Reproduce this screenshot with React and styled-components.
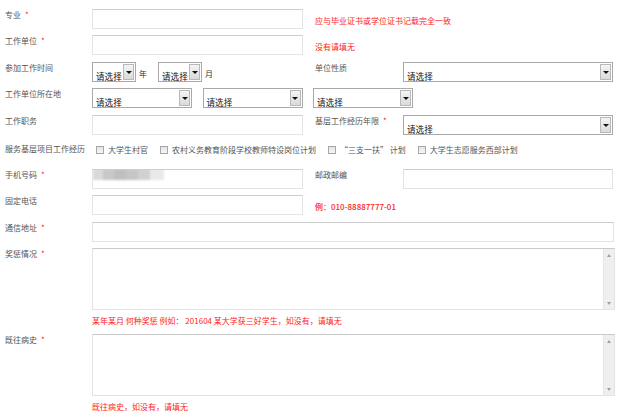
import React from "react";
import styled, { createGlobalStyle } from "styled-components";

const GlobalStyle = createGlobalStyle`
  html, body { margin: 0; padding: 0; background: #fff; }
  body {
    font-family: "Noto Sans CJK SC", "Liberation Sans", sans-serif;
    font-size: 8px;
    color: #555;
  }
`;

const Form = styled.div`
  width: 636px;
  display: flex;
  flex-direction: column;
  gap: 6.5px;
  padding-top: 8.5px;
  box-sizing: border-box;
`;

const Row = styled.div`
  display: flex;
  align-items: flex-start;
  height: ${(p) => p.h || 20}px;
  flex-shrink: 0;
`;

const Label = styled.div`
  width: 92px;
  flex-shrink: 0;
  box-sizing: border-box;
  padding-left: 5px;
  padding-top: ${(p) => (p.pt != null ? p.pt : 1)}px;
  line-height: 10px;
  color: #555;
  white-space: nowrap;
`;

const RightLabel = styled(Label)`
  width: 88px;
  padding-left: 0;
  margin-left: 12px;
`;

const Req = styled.span`
  color: #f22;
  margin-left: 4px;
`;

const TextBox = styled.div`
  width: ${(p) => p.w}px;
  height: ${(p) => p.h || 20}px;
  flex-shrink: 0;
  box-sizing: border-box;
  border: 1px solid #e3e3e3;
  border-top-color: #cdcdcd;
  background: #fff;
  overflow: hidden;
`;

const Hint = styled.div`
  margin-left: 12px;
  padding-top: 7px;
  line-height: 10px;
  color: #f22;
  white-space: nowrap;
  font-weight: ${(p) => (p.bold ? 500 : 400)};
`;

const FieldGroup = styled.div`
  width: ${(p) => p.w || 211}px;
  flex-shrink: 0;
  display: flex;
  align-items: flex-start;
  gap: ${(p) => p.gap || 0}px;
`;

const SelectBox = styled.div`
  width: ${(p) => p.w}px;
  height: 20px;
  flex-shrink: 0;
  box-sizing: border-box;
  border: 1px solid #a9a9a9;
  background: #fff;
  display: flex;
`;

const SelectText = styled.div`
  flex: 1;
  padding: 8px 0 0 3px;
  line-height: 10px;
  font-size: 8.6px;
  color: #111;
  overflow: hidden;
  white-space: nowrap;
`;

const ArrowButton = styled.div`
  width: 11px;
  margin: 1px;
  box-sizing: border-box;
  border: 1px solid #b8b8b8;
  background: linear-gradient(#f4f4f4, #dadada);
  display: flex;
  align-items: center;
  justify-content: center;
`;

const Triangle = styled.div`
  width: 0;
  height: 0;
  border-left: 3px solid transparent;
  border-right: 3px solid transparent;
  border-top: 3px solid #111;
  margin-top: 1px;
`;

const Unit = styled.span`
  align-self: flex-end;
  line-height: 10px;
  padding-bottom: 3px;
  margin: 0 ${(p) => p.mr || 0}px 0 3px;
  color: #333;
`;

const CheckGroup = styled.div`
  display: flex;
  align-items: center;
  padding-top: 4px;
  padding-left: 4px;
  white-space: nowrap;
`;

const CheckItem = styled.label`
  display: flex;
  align-items: center;
  gap: 4px;
  margin-right: 12px;
  line-height: 10px;
  color: #555;
`;

const CheckBox = styled.span`
  width: 8px;
  height: 8px;
  box-sizing: border-box;
  border: 1px solid #a8a8a8;
  background: linear-gradient(#e4e4e4, #f7f7f7);
  display: inline-block;
`;

const Blur = styled.div`
  width: 71px;
  height: 11px;
  margin-top: -1px;
  background: linear-gradient(
    90deg,
    #d9d9d9 0 14%,
    #c8c8c8 14% 30%,
    #bfbfbf 30% 47%,
    #c6c6c6 47% 63%,
    #d0d0d0 63% 80%,
    #e9e9e9 80% 100%
  );
  filter: blur(0.8px);
`;

const AreaBox = styled.div`
  width: 523px;
  height: 62px;
  box-sizing: border-box;
  border: 1px solid #e3e3e3;
  border-top: 1px solid #c9c9c9;
  background: #fff;
  display: flex;
  justify-content: flex-end;
`;

const Scrollbar = styled.div`
  width: 11px;
  background: #efefef;
  border-left: 1px solid #e6e6e6;
  display: flex;
  flex-direction: column;
  justify-content: space-between;
  align-items: center;
  padding: 5px 0 4px;
  box-sizing: border-box;
`;

const ScrollArrow = styled.div`
  width: 0;
  height: 0;
  border-left: 2.5px solid transparent;
  border-right: 2.5px solid transparent;
  ${(p) =>
    p.up
      ? "border-bottom: 3px solid #a0a0a0;"
      : "border-top: 3px solid #a0a0a0;"}
`;

const AreaColumn = styled.div`
  display: flex;
  flex-direction: column;
`;

const AreaHint = styled.div`
  margin-top: 5px;
  line-height: 12px;
  color: #f22;
  white-space: nowrap;
`;

const Select = ({ w }) => (
  <SelectBox w={w}>
    <SelectText>请选择</SelectText>
    <ArrowButton>
      <Triangle />
    </ArrowButton>
  </SelectBox>
);

const LabelText = ({ children, req, as: Comp = Label, pt }) => (
  <Comp pt={pt}>
    {children}
    {req && <Req>*</Req>}
  </Comp>
);

export default function App() {
  return (
    <>
      <GlobalStyle />
      <Form>
        <Row>
          <LabelText req>专业</LabelText>
          <TextBox w={211} />
          <Hint>应与毕业证书或学位证书记载完全一致</Hint>
        </Row>
        <Row>
          <LabelText req>工作单位</LabelText>
          <TextBox w={211} />
          <Hint>没有请填无</Hint>
        </Row>
        <Row>
          <LabelText>参加工作时间</LabelText>
          <FieldGroup>
            <Select w={44} />
            <Unit mr={11}>年</Unit>
            <Select w={44} />
            <Unit>月</Unit>
          </FieldGroup>
          <LabelText as={RightLabel}>单位性质</LabelText>
          <Select w={210} />
        </Row>
        <Row>
          <LabelText>工作单位所在地</LabelText>
          <FieldGroup gap={10.5} w={321}>
            <Select w={100} />
            <Select w={100} />
            <Select w={100} />
          </FieldGroup>
        </Row>
        <Row>
          <LabelText>工作职务</LabelText>
          <TextBox w={211} />
          <LabelText as={RightLabel} req>
            基层工作经历年限
          </LabelText>
          <Select w={210} />
        </Row>
        <Row h={21}>
          <LabelText pt={3}>服务基层项目工作经历</LabelText>
          <CheckGroup>
            <CheckItem>
              <CheckBox />
              大学生村官
            </CheckItem>
            <CheckItem>
              <CheckBox />
              农村义务教育阶段学校教师特设岗位计划
            </CheckItem>
            <CheckItem>
              <CheckBox />
              “三支一扶” 计划
            </CheckItem>
            <CheckItem>
              <CheckBox />
              大学生志愿服务西部计划
            </CheckItem>
          </CheckGroup>
        </Row>
        <Row>
          <LabelText req>手机号码</LabelText>
          <TextBox w={211}>
            <Blur />
          </TextBox>
          <LabelText as={RightLabel}>邮政邮编</LabelText>
          <TextBox w={210} />
        </Row>
        <Row>
          <LabelText>固定电话</LabelText>
          <TextBox w={211} />
          <Hint bold>例：010-88887777-01</Hint>
        </Row>
        <Row>
          <LabelText req>通信地址</LabelText>
          <TextBox w={522} />
        </Row>
        <Row h={79.5}>
          <LabelText req>奖惩情况</LabelText>
          <AreaColumn>
            <AreaBox>
              <Scrollbar>
                <ScrollArrow up />
                <ScrollArrow />
              </Scrollbar>
            </AreaBox>
            <AreaHint>
              某年某月 何种奖惩 例如： 201604 某大学获三好学生，如没有，请填无
            </AreaHint>
          </AreaColumn>
        </Row>
        <Row h={79}>
          <LabelText req>既往病史</LabelText>
          <AreaColumn>
            <AreaBox>
              <Scrollbar>
                <ScrollArrow up />
                <ScrollArrow />
              </Scrollbar>
            </AreaBox>
            <AreaHint>既往病史，如没有，请填无</AreaHint>
          </AreaColumn>
        </Row>
      </Form>
    </>
  );
}
